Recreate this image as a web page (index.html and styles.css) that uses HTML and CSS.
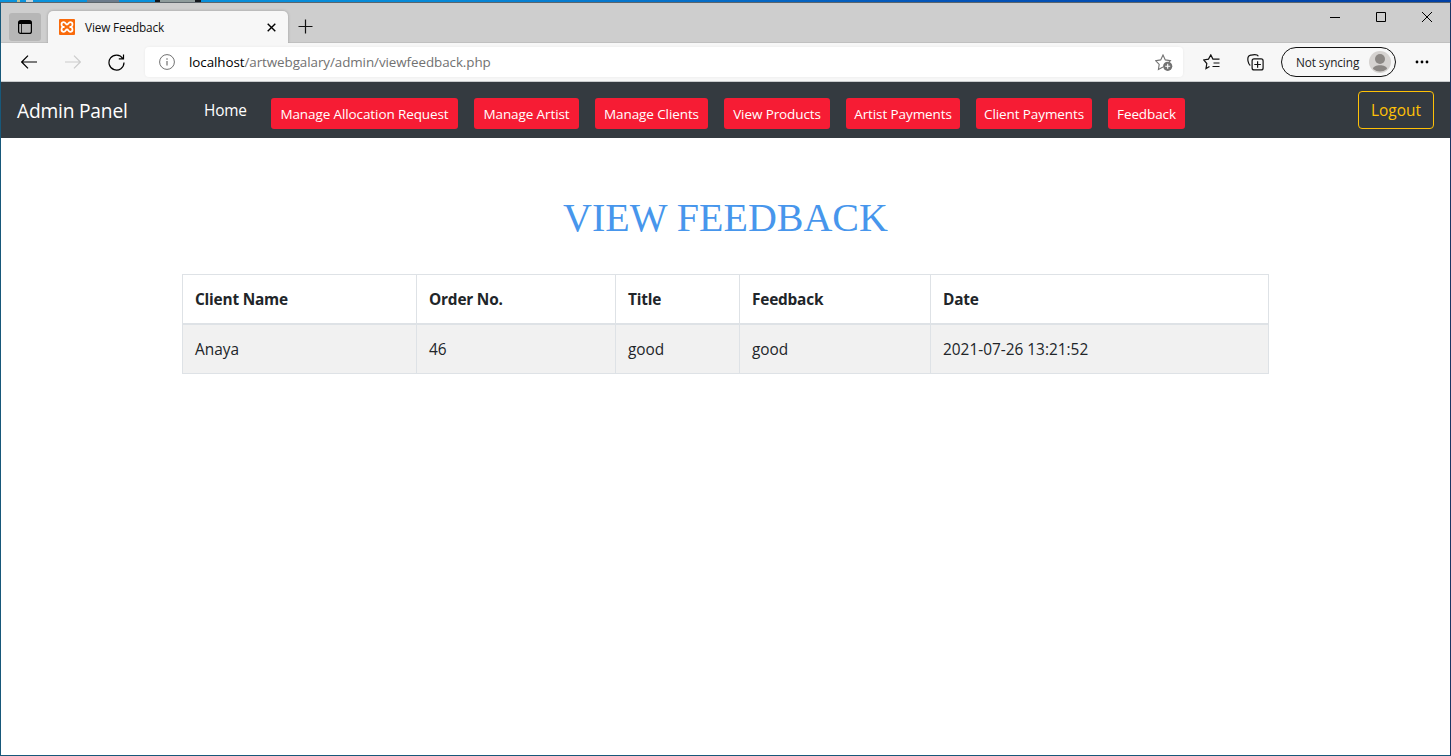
FILE: index.html
```html
<!DOCTYPE html>
<html lang="en">
<head>
<meta charset="utf-8">
<title>View Feedback</title>
<link rel="stylesheet" href="styles.css">
</head>
<body>
<div class="desktop-strip"><i class="chip chip-light"></i><i class="chip chip-gray"></i><i class="chip chip-dark"></i></div>
<div class="window">
  <header class="tabbar">
    <div class="tab-menu">
      <svg width="14" height="14" viewBox="0 0 14 14"><rect x=".6" y=".6" width="12.8" height="12.8" rx="2" fill="none" stroke="#000" stroke-width="1.2"/><path d="M1 1h12v3H1z"/><path d="M3.500 4v9" stroke="#000" stroke-width=".8"/></svg>
    </div>
    <div class="tab">
      <svg class="favicon" width="16" height="16" viewBox="0 0 16 16"><rect width="16" height="16" rx="1" fill="#f96a0b"/><path d="M4 8C1.800 6.800 2 3.200 4.700 3.200 6.700 3.200 6.600 5.600 8 5.600s1.300-2.400 3.300-2.400c2.700 0 2.900 3.600.7 4.800 2.200 1.200 2 4.800-.7 4.800-2 0-1.900-2.400-3.300-2.400s-1.300 2.400-3.300 2.400C2 12.800 1.800 9.200 4 8zM4 8h1.500M10.500 8H12" fill="none" stroke="#fff" stroke-width="1.800"/></svg>
      <span class="tab-title">View Feedback</span>
      <svg class="tab-close" width="9" height="9" viewBox="0 0 9 9"><path d="M.7.7l7.600 7.600M8.300.7L.7 8.300" stroke="#000" stroke-width="1.400"/></svg>
    </div>
    <svg class="new-tab" width="15" height="15" viewBox="0 0 15 15"><path d="M7.500.5v14M.5 7.500h14" stroke="#111" stroke-width="1.200"/></svg>
    <div class="controls">
      <svg width="10" height="10" viewBox="0 0 10 10"><path d="M0 5.500h10" stroke="#000"/></svg>
      <svg width="10" height="10" viewBox="0 0 10 10"><path d="M.5.5h9v9h-9z" stroke="#000" fill="none"/></svg>
      <svg width="10" height="10" viewBox="0 0 10 10"><path d="M0 0l10 10M10 0L0 10" stroke="#000"/></svg>
    </div>
  </header>
  <div class="toolbar">
    <svg class="back" width="16" height="14" viewBox="0 0 16 14"><path d="M16 7H.8M7 .6L.7 7 7 13.400" fill="none" stroke="#000" stroke-width="1.200"/></svg>
    <svg class="forward" width="16" height="14" viewBox="0 0 16 14"><path d="M0 7h15.200M9 .6L15.300 7 9 13.400" fill="none" stroke="#ccc" stroke-width="1.200"/></svg>
    <svg class="reload" width="17" height="17" viewBox="0 0 17 17"><path d="M14.800 4.500A7.500 7.500 0 1 0 16 8.500M15.500.5v4.300h-4.700" fill="none" stroke="#000" stroke-width="1.200"/></svg>
    <div class="address">
      <svg class="info" width="16" height="16" viewBox="0 0 16 16"><circle cx="8" cy="8" r="7.400" fill="none" stroke="#717171"/><path d="M8 7v4.500M8 4.300v1.400" stroke="#717171" stroke-width="1.200"/></svg>
      <span class="url"><b>localhost</b>/artwebgalary/admin/viewfeedback.php</span>
      <svg class="star-add" width="18" height="17" viewBox="0 0 18 17"><path d="M8 13.100L3.400 15.500l.8-5.100L.6 6.700l5.100-.8L8 1l2.300 4.900 5.100.8-1.600 1.700" fill="none" stroke="#717171" stroke-width="1.100"/><circle cx="12.700" cy="12.300" r="4.600" fill="#717171"/><path d="M12.700 9.800v5M10.200 12.300h5" stroke="#fff" stroke-width="1.100"/></svg>
    </div>
    <svg class="favorites" width="17" height="16" viewBox="0 0 17 16"><path d="M6.500 12.400L3 14.600l.8-5.100L.7 5.900l4.800-.8L7.800.9l2.100 4.200H16.500M10.500 9h6M9.500 12.500h7" fill="none" stroke="#111" stroke-width="1.200"/></svg>
    <svg class="collections" width="17" height="17" viewBox="0 0 17 17"><rect x="5.100" y="4.900" width="11" height="11" rx="2" fill="none" stroke="#111" stroke-width="1.200"/><path d="M10.600 7.200v6.600M7.300 10.500h6.600M3.300 11.500C1 10 .4 5 1.200 3c.6-1.600 1.600-1.600 3-1.900 2.800-.6 6-1.200 7.200 1.200" fill="none" stroke="#111" stroke-width="1.200"/></svg>
    <div class="profile"><span class="sync">Not syncing</span>
      <svg width="22" height="22" viewBox="0 0 22 22"><circle cx="11" cy="11" r="11" fill="#d5d2d0"/><circle cx="11" cy="8" r="5" fill="#8b8784"/><path d="M4 18c0-5 14-5 14 0q-7 5-14 0z" fill="#8b8784"/></svg>
    </div>
    <svg class="more" width="14" height="4" viewBox="0 0 14 4"><circle cx="2" cy="2" r="1.400"/><circle cx="7" cy="2" r="1.400"/><circle cx="12" cy="2" r="1.400"/></svg>
  </div>
  <nav class="navbar">
    <a class="brand">Admin Panel</a>
    <a class="home">Home</a>
    <div class="links">
      <a class="btn w-allocation">Manage Allocation Request</a>
      <a class="btn w-artist">Manage Artist</a>
      <a class="btn w-clients">Manage Clients</a>
      <a class="btn w-products">View Products</a>
      <a class="btn w-artist-pay">Artist Payments</a>
      <a class="btn w-client-pay">Client Payments</a>
      <a class="btn w-feedback">Feedback</a>
    </div>
    <a class="logout">Logout</a>
  </nav>
  <main class="content">
    <h1 class="title">VIEW FEEDBACK</h1>
    <table class="table">
      <colgroup><col class="c1"><col class="c2"><col class="c3"><col class="c4"><col class="c5"></colgroup>
      <thead><tr><th>Client Name</th><th>Order No.</th><th>Title</th><th>Feedback</th><th>Date</th></tr></thead>
      <tbody><tr><td>Anaya</td><td>46</td><td>good</td><td>good</td><td>2021-07-26 13:21:52</td></tr></tbody>
    </table>
  </main>
</div>
</body>
</html>
```
FILE: styles.css
```css
* { box-sizing: border-box; }
html, body { margin: 0; height: 100%; overflow: hidden; }
body { display: flex; flex-direction: column; font-family: "Open Sans", "Noto Sans", sans-serif; font-size: 15.4px; color: #212529; background: #fff; }
svg { display: block; flex: none; }
span, a { white-space: nowrap; }

.desktop-strip { flex: none; height: 2px; display: flex; background: linear-gradient(90deg, #0a93dc 0, #078ad8 30%, #0454b8 65%, #0040a6 100%); }
.chip { height: 2px; }
.chip-light { width: 16px; margin-left: 17px; background: linear-gradient(90deg, #b9c39a 3px, #0a93dc 3px 9px, #c5d3da 9px); }
.chip-gray { width: 32px; margin-left: 54px; background: #6c7b8b; }
.chip-dark { width: 46px; margin-left: 36px; background: linear-gradient(90deg, #14191e 5px, #8f9c9c 5px 40px, #14191e 40px); }

.window { flex: 1; min-height: 0; display: flex; flex-direction: column; border: 1px solid #17587a; border-top-color: #5d656b; border-right-color: #1c3563; background: #fff; }
.tabbar { flex: none; height: 40px; display: flex; background: #cecece; border-bottom: 1px solid #c0c0c0; }
.tab-menu { width: 32px; height: 28px; margin: 10px 0 0 8px; border-radius: 3px; background: #b6b6b6; display: flex; align-items: center; justify-content: center; }
.tab { width: 240px; height: 32px; margin: 8px 0 0 7px; padding: 0 12px 0 11px; display: flex; align-items: center; border-radius: 5px 5px 0 0; background: #f7f7f7; box-shadow: 0 0 3px rgba(0,0,0,.25); clip-path: inset(-3px -3px 0); }
.tab-title { margin: -1px 0 0 10px; font-size: 11.800px; color: #111; letter-spacing: -.15px; }
.tab-close { margin-left: auto; }
.new-tab { margin: 16px 0 0 10px; }
.controls { display: flex; gap: 36px; margin: 9px 18px 0 auto; }

.toolbar { flex: none; height: 39px; display: flex; align-items: center; background: #f7f7f7; border-bottom: 1px solid #c9cbcd; }
.back { margin-left: 20px; }
.forward { margin-left: 28px; }
.reload { margin-left: 27px; }
.address { width: 1038px; height: 30px; margin-left: 20px; padding: 0 10px 0 14px; display: flex; align-items: center; border-radius: 4px; background: #fff; box-shadow: 0 0 3px rgba(0,0,0,.06); }
.url { margin-left: 14px; font-size: 13.400px; letter-spacing: -.07px; color: #717171; }
.url b { font-weight: 400; color: #000; }
.star-add { margin-left: auto; }
.favorites { margin-left: 20px; }
.collections { margin-left: 27px; }
.profile { width: 115px; height: 30px; margin-left: 17px; padding: 0 4px 0 14px; display: flex; align-items: center; justify-content: space-between; border: 1px solid #111; border-radius: 15px; }
.sync { font-size: 11.800px; letter-spacing: -.1px; color: #222; }
.more { margin-left: 19px; }

.navbar { flex: none; height: 56px; display: flex; background: #343a40; color: #fff; padding: 0 16px; }
.brand { width: 187px; font-size: 19.200px; line-height: 58px; letter-spacing: -.2px; }
.home { width: 67px; line-height: 58px; letter-spacing: -.2px; }
.links { display: flex; gap: 16px; margin-top: 16px; }
.btn { height: 31px; border-radius: 3px; background: #f61c34; font-size: 13.500px; line-height: 33px; text-align: center; letter-spacing: -.1px; }
.w-allocation { width: 187px; }
.w-artist { width: 105px; }
.w-clients { width: 113px; }
.w-products { width: 106px; }
.w-artist-pay { width: 114px; }
.w-client-pay { width: 116px; }
.w-feedback { width: 77px; }
.logout { width: 76px; height: 38px; margin: 9px 0 0 auto; border: 1px solid #ffc107; border-radius: 4px; color: #ffc107; line-height: 38px; text-align: center; }

.content { flex: 1; display: flex; flex-direction: column; padding: 0 181px; }
.title { margin: 56px 0 0; height: 80px; font: 400 40px/48px "Liberation Serif", serif; color: #4796ec; text-align: center; }
.table { width: 1087px; table-layout: fixed; border-collapse: collapse; line-height: 24px; }
.c1 { width: 234px; }
.c2 { width: 199px; }
.c3 { width: 124px; }
.c4 { width: 191px; }
.c5 { width: 338px; }
.table th, .table td { border: 1px solid #dee2e6; padding: 13px 12px 11px; text-align: left; }
.table thead th { border-bottom-width: 2px; letter-spacing: -.2px; }
.table tbody tr { background: #f1f1f1; }
```
